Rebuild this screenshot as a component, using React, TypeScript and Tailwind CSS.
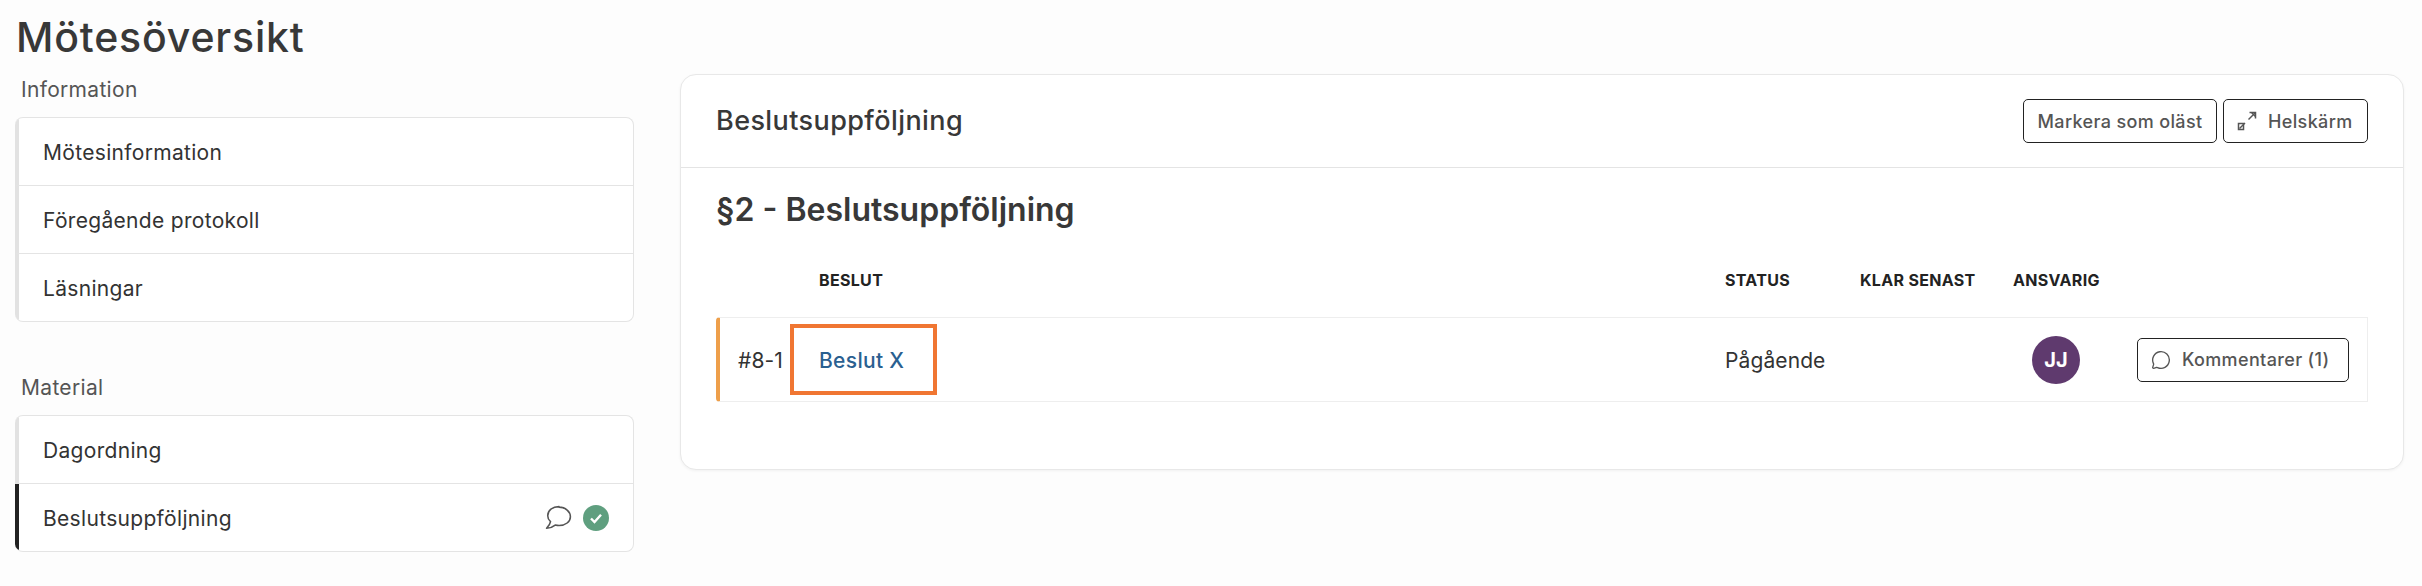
import { MessageCircle } from "lucide-react";

function CommentBubble({ className }: { className?: string }) {
  return (
    <svg viewBox="0 0 28 24" fill="none" stroke="currentColor" strokeWidth="1.5" className={className}>
      <path d="M14.5 1.5C8.2 1.5 3.6 5.3 3.6 10.2c0 2.3 1 4.3 2.7 5.8-.3 2-1.500 4-3.800 6.400 3.300-.1 6.200-1.400 8.300-3.100 1.200.3 2.400.5 3.700.5 6.300 0 11-3.800 11-8.600s-4.700-9.200-11-9.200Z" strokeLinejoin="round" />
    </svg>
  );
}

function ExpandIcon() {
  return (
    <svg viewBox="0 0 20 20" fill="none" stroke="currentColor" strokeWidth="1.5" className="h-[20px] w-[20px] text-[#555]">
      <path d="M1.500 12.500h5v6h-5z" />
      <path d="M2.500 17.500l5.500-5.500" />
      <path d="M12.500 1.500h6v6" />
      <path d="M18 2l-6.500 6.500" />
      <path d="M14.500 1.500l4 4" />
    </svg>
  );
}

function NavRow({ label, active, children }: { label: string; active?: boolean; children?: React.ReactNode }) {
  return (
    <div className={`flex h-[68px] items-center justify-between border-b border-b-[#e4e4e4] border-l-4 pl-6 pr-6 last:h-[67px] last:border-b-0 ${active ? "border-l-[#222]" : "border-l-[#e2e2e2]"}`}>
      <span className="pt-[2px] text-[21px] tracking-[0.015em] text-[#333]">{label}</span>
      {children}
    </div>
  );
}

function SectionLabel({ children }: { children: string }) {
  return <div className="mb-3 flex h-8 items-center pl-[6px] pt-[2px] text-[21px] tracking-[0.015em] text-[#555]">{children}</div>;
}

function OutlineButton({ children, className }: { children: React.ReactNode; className?: string }) {
  return (
    <button className={`flex h-[44px] items-center rounded-[5px] border border-[#222] bg-white text-[18px] font-medium tracking-[0.02em] text-[#555] ${className ?? ""}`}>
      {children}
    </button>
  );
}

const th = "text-[16px] font-bold uppercase tracking-[0.02em] text-[#222]";

export default function App() {
  return (
    <div className="min-h-screen bg-[#fdfdfd] pl-[15px] pr-[18px] font-['Inter',sans-serif]">
      <h1 className="flex h-[73px] items-center pl-px pt-[2px] text-[41px] font-medium tracking-[0.02em] text-[#383838]">Mötesöversikt</h1>
      <div className="flex items-start gap-[46px]">
        <aside className="w-[619px] shrink-0">
          <SectionLabel>Information</SectionLabel>
          <div className="overflow-hidden rounded-lg border border-l-0 border-[#e4e4e4] bg-white">
            <NavRow label="Mötesinformation" />
            <NavRow label="Föregående protokoll" />
            <NavRow label="Läsningar" />
          </div>
          <div className="mt-[49px]">
            <SectionLabel>Material</SectionLabel>
            <div className="overflow-hidden rounded-lg border border-l-0 border-[#e4e4e4] bg-white">
              <NavRow label="Dagordning" />
              <NavRow label="Beslutsuppföljning" active>
                <div className="flex items-center gap-[10px]">
                  <CommentBubble className="h-[25px] w-[29px] text-[#555]" />
                  <div className="flex h-[26px] w-[26px] items-center justify-center rounded-full bg-[#5f9f7f]">
                    <svg viewBox="0 0 14 14" fill="none" stroke="white" strokeWidth="2.4" className="h-[14px] w-[14px]">
                      <path d="M2 7.500 5.500 11 12 3.800" />
                    </svg>
                  </div>
                </div>
              </NavRow>
            </div>
          </div>
        </aside>

        <main className="mt-px flex-1 rounded-2xl border border-[#e8e8e8] bg-white shadow-[0_1px_3px_rgba(0,0,0,0.05)]">
          <header className="flex h-[93px] items-center justify-between border-b border-[#e4e4e4] pl-[35px] pr-[35px]">
            <h2 className="text-[27px] font-medium tracking-[0.015em] text-[#383838]">Beslutsuppföljning</h2>
            <div className="flex gap-[6px]">
              <OutlineButton className="w-[194px] justify-center">Markera som oläst</OutlineButton>
              <OutlineButton className="w-[145px] gap-[11px] pl-[13px]">
                <ExpandIcon />
                Helskärm
              </OutlineButton>
            </div>
          </header>
          <div className="h-[301px] pl-[35px] pr-[35px] pt-[22px]">
            <h3 className="text-[32px] font-semibold leading-[40px] text-[#383838]">§2 - Beslutsuppföljning</h3>
            <div className="mt-[38px] grid h-[24px] grid-cols-[103px_906px_135px_153px_1fr] items-center">
              <span />
              <span className={th}>Beslut</span>
              <span className={th}>Status</span>
              <span className={th}>Klar senast</span>
              <span className={th}>Ansvarig</span>
            </div>
            <div className="mt-[25px] grid h-[85px] grid-cols-[70px_935px_135px_153px_1fr] items-center rounded-l border border-l-4 border-[#eeeeee] border-l-[#ee9f4a] text-[21px] tracking-[0.005em] text-[#333]">
              <span className="pl-[18px] pt-[2px]">#8-1</span>
              <div className="flex">
                <div className="flex h-[71px] w-[147px] items-center border-4 border-[#f07632] pl-[25px] pt-[2px] font-medium tracking-[0.015em] text-[#2a6090]">Beslut X</div>
              </div>
              <span className="pt-[2px]">Pågående</span>
              <span />
              <div className="flex items-center justify-between pl-[19px] pr-[18px]">
                <div className="flex h-12 w-12 items-center justify-center rounded-full bg-[#5f3a6e] text-[20px] font-bold text-white">JJ</div>
                <OutlineButton className="w-[212px] gap-[11px] pl-[13px]">
                  <MessageCircle className="h-[20px] w-[20px] text-[#555]" strokeWidth={1.6} />
                  Kommentarer (1)
                </OutlineButton>
              </div>
            </div>
          </div>
        </main>
      </div>
    </div>
  );
}
